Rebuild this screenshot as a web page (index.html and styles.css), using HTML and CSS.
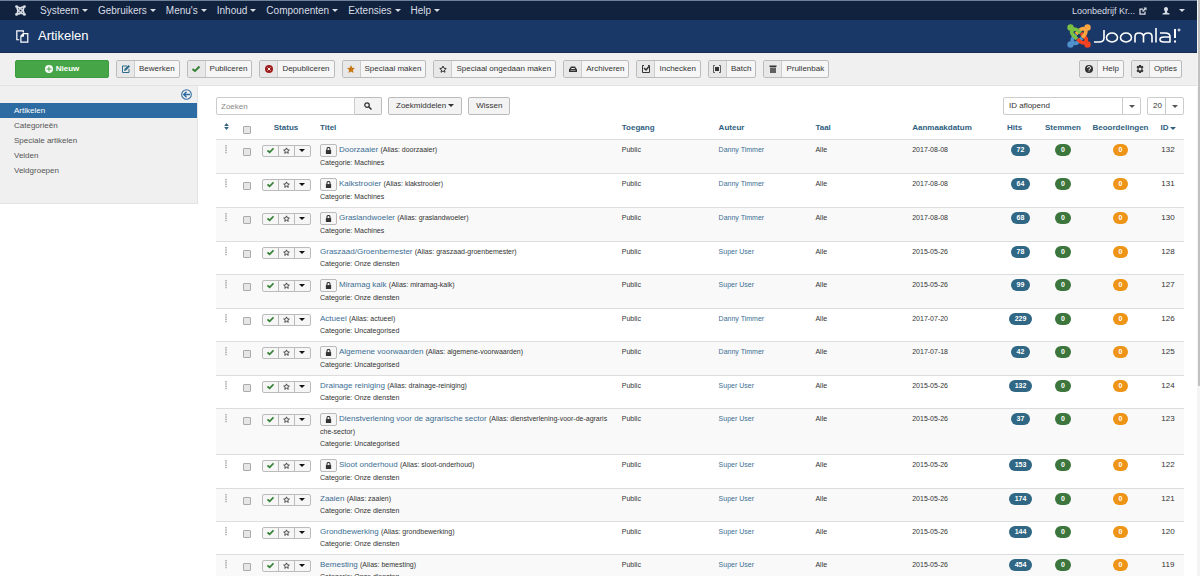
FILE: index.html
```html
<!DOCTYPE html>
<html lang="nl">
<head>
<meta charset="utf-8">
<meta name="viewport" content="width=device-width, initial-scale=1">
<title>Artikelen</title>
<link rel="stylesheet" href="styles.css">
</head>
<body>
<svg class="sprite" aria-hidden="true">
  <symbol id="joomla" viewBox="0 0 24 24"><g fill="none" stroke-width="3.600" stroke-linejoin="round"><path class="j-blue" d="M15 14l-4 4q-3 2.500-5 .5T6.500 13L9 10.500"/><path class="j-red" d="M14 9l4 4q2.500 3 .5 5t-5.500-.5L10.500 15"/><path class="j-orange" d="M9 10l4-4q3-2.500 5-.5T17.500 11L15 13.500"/><path class="j-green" d="M10 15l-4-4q-2.500-3-.5-5t5.500.5L13.500 9"/></g><circle class="f-green" cx="3.500" cy="3.500" r="3.200"/><circle class="f-orange" cx="20.500" cy="3.500" r="3.200"/><circle class="f-red" cx="20.500" cy="20.500" r="3.200"/><circle class="f-blue" cx="3.500" cy="20.500" r="3.200"/></symbol>
  <symbol id="plus" viewBox="0 0 16 16"><path fill="currentColor" fill-rule="evenodd" d="M8 0a8 8 0 1 0 0 16A8 8 0 0 0 8 0zM7 3h2v4h4v2H9v4H7V9H3V7h4z"/></symbol>
  <symbol id="edit" viewBox="0 0 16 16"><path fill="none" stroke="currentColor" stroke-width="2" d="M10 2H1v13h13V8"/><path fill="currentColor" d="M4 12l1-4 8-8 3 3-8 8z"/></symbol>
  <symbol id="check" viewBox="0 0 16 16"><path fill="none" stroke="currentColor" stroke-width="4" d="M1 8l5 4 9-9"/></symbol>
  <symbol id="cancel" viewBox="0 0 16 16"><circle cx="8" cy="8" r="8" fill="currentColor"/><path stroke="#eee" stroke-width="2" d="M5 5l6 6M11 5l-6 6"/></symbol>
  <symbol id="star" viewBox="0 0 16 16"><path fill="currentColor" d="M8 0l2.400 5.500 5.600.5-4.200 4 1.200 6L8 13l-5 3 1.200-6L0 6l5.600-.5z"/></symbol>
  <symbol id="star-o" viewBox="0 0 16 16"><path fill="none" stroke="currentColor" stroke-width="2" d="M8 2l2 4.500 4.500.5-3.500 3 1 4.500-4-2.500-4 2.500 1-4.500L1.500 7 6 6.500z"/></symbol>
  <symbol id="archive" viewBox="0 0 16 16"><path fill="currentColor" fill-rule="evenodd" d="M4 3h8l4 6v5H0V9zM5 6L4 8h8l-1-2zM3 11v1h10v-1z"/></symbol>
  <symbol id="checkin" viewBox="0 0 16 16"><path fill="none" stroke="currentColor" stroke-width="2" d="M4 1H1v14h14V1h-3"/><path fill="none" stroke="currentColor" stroke-width="3" d="M4 6l4 4 6-7"/></symbol>
  <symbol id="batch" viewBox="0 0 16 16"><path fill="none" stroke="currentColor" stroke-width="1.500" d="M4 1H1v14h3M12 1h3v14h-3"/><path fill="currentColor" d="M4 4h8v8H4z"/></symbol>
  <symbol id="trash" viewBox="0 0 16 16"><path fill="currentColor" d="M1 1h14v3H1z"/><path fill="currentColor" fill-opacity=".75" d="M2 5h12v11H2z"/></symbol>
  <symbol id="help" viewBox="0 0 16 16"><circle cx="8" cy="8" r="8" fill="currentColor"/><path fill="none" stroke="#eee" stroke-width="2" d="M5 6q0-3 3-3t3 3-3 3v1M8 11v2"/></symbol>
  <symbol id="cog" viewBox="0 0 16 16"><path fill="currentColor" fill-rule="evenodd" d="M6 0h4l.5 2.500L13 1.500l2 3-2 2v3l2 2-2 3-2.500-1L10 16H6l-.5-2.500-2.500 1-2-3 2-2v-3l-2-2 2-3 2.500 1zM8 5a3 3 0 1 0 0 6 3 3 0 0 0 0-6z"/></symbol>
  <symbol id="copy" viewBox="0 0 16 16"><g fill="none" stroke="currentColor" stroke-width="1.500"><path d="M4 12H1V1h8v2M9 4.500h5.500V15H6V7.500zM9 4.500v3H6"/></g></symbol>
  <symbol id="external" viewBox="0 0 16 16"><path fill="none" stroke="currentColor" stroke-width="2.500" d="M8 4H2v10h10V9"/><path fill="currentColor" d="M9 1h6v6l-2-2-5 5-2-2 5-5z"/></symbol>
  <symbol id="user" viewBox="0 0 16 16"><path fill="currentColor" d="M8 0c3 0 4 2 4 4s-1 4-2 5v2l5 2v2H1v-2l5-2V9C5 8 4 6 4 4s1-4 4-4z"/></symbol>
  <symbol id="back" viewBox="0 0 16 16"><circle cx="8" cy="8" r="7" fill="none" stroke="currentColor" stroke-width="1.500"/><path fill="none" stroke="currentColor" stroke-width="2" d="M13 8H4M8 4L4 8l4 4"/></symbol>
  <symbol id="search" viewBox="0 0 16 16"><circle cx="6" cy="6" r="4.500" fill="none" stroke="currentColor" stroke-width="2.500"/><path stroke="currentColor" stroke-width="3" d="M9.500 9.500L15 15"/></symbol>
  <symbol id="lock" viewBox="0 0 16 16"><path fill="none" stroke="currentColor" stroke-width="2.500" d="M4.500 8V5q0-4 3.500-4t3.500 4v3"/><path fill="currentColor" d="M2 7h12v9H2z"/></symbol>
  <symbol id="sort" viewBox="0 0 8 12"><path fill="currentColor" d="M0 5l4-5 4 5zM0 7h8l-4 5z"/></symbol>
  <symbol id="grip" viewBox="0 0 4 12"><path fill="currentColor" d="M1 0h2v2H1zM1 3h2v2H1zM1 6h2v2H1zM1 9h2v2H1z"/></symbol>
</svg>

<nav class="navbar">
  <a class="brand" href="#" aria-label="Joomla"><svg class="ic"><use href="#joomla"/></svg></a>
  <a class="m" href="#">Systeem<i class="caret"></i></a>
  <a class="m" href="#">Gebruikers<i class="caret"></i></a>
  <a class="m" href="#">Menu's<i class="caret"></i></a>
  <a class="m" href="#">Inhoud<i class="caret"></i></a>
  <a class="m" href="#">Componenten<i class="caret"></i></a>
  <a class="m" href="#">Extensies<i class="caret"></i></a>
  <a class="m" href="#">Help<i class="caret"></i></a>
  <a class="site" href="#">Loonbedrijf Kr... <svg class="ic"><use href="#external"/></svg></a>
  <a class="account" href="#" aria-label="Account"><svg class="ic"><use href="#user"/></svg><i class="caret"></i></a>
</nav>

<header class="header">
  <svg class="page-icon"><use href="#copy"/></svg>
  <h1>Artikelen</h1>
  <svg class="logo" viewBox="0 0 116 24" role="img" aria-label="Joomla!">
    <svg class="mark" x="1" width="24" height="24"><use href="#joomla"/></svg>
    <g fill="none" stroke="#fff" stroke-width="1.600">
      <path d="M38 6v8q0 4-5 4h-5"/>
      <ellipse cx="46" cy="13.500" rx="5.500" ry="4.500"/><ellipse cx="60" cy="13.500" rx="5.500" ry="4.500"/>
      <path d="M69 18.500v-6q0-3.500 4-3.500t4.500 3.500v6M77.500 12.500Q78 9 82 9t4 3.500v6M90 4v14.500"/>
      <path d="M104 18.500v-6Q104 9 99 9h-5M104 13h-6q-4 0-4 2.500t4 2.500h6"/>
      <path stroke-width="2" d="M109 5v9M109 16.500v2"/><circle cx="113" cy="6" r="1" stroke-width="1"/>
    </g>
  </svg>
</header>

<div class="toolbar">
  <button class="new"><svg class="ic"><use href="#plus"/></svg>Nieuw</button>
  <button class="tb"><span class="cell blue"><svg class="ic"><use href="#edit"/></svg></span>Bewerken</button>
  <button class="tb"><span class="cell green"><svg class="ic"><use href="#check"/></svg></span>Publiceren</button>
  <button class="tb"><span class="cell red"><svg class="ic"><use href="#cancel"/></svg></span>Depubliceren</button>
  <button class="tb"><span class="cell orange"><svg class="ic"><use href="#star"/></svg></span>Speciaal maken</button>
  <button class="tb"><span class="cell"><svg class="ic"><use href="#star-o"/></svg></span>Speciaal ongedaan maken</button>
  <button class="tb"><span class="cell"><svg class="ic"><use href="#archive"/></svg></span>Archiveren</button>
  <button class="tb"><span class="cell"><svg class="ic"><use href="#checkin"/></svg></span>Inchecken</button>
  <button class="tb"><span class="cell"><svg class="ic"><use href="#batch"/></svg></span>Batch</button>
  <button class="tb"><span class="cell"><svg class="ic"><use href="#trash"/></svg></span>Prullenbak</button>
  <button class="tb push"><span class="cell"><svg class="ic"><use href="#help"/></svg></span>Help</button>
  <button class="tb"><span class="cell"><svg class="ic"><use href="#cog"/></svg></span>Opties</button>
</div>

<div class="layout">
  <aside class="sidebar">
    <button class="collapse" aria-label="Zijbalk verbergen"><svg><use href="#back"/></svg></button>
    <a class="active" href="#">Artikelen</a>
    <a href="#">Categorieën</a>
    <a href="#">Speciale artikelen</a>
    <a href="#">Velden</a>
    <a href="#">Veldgroepen</a>
  </aside>

  <main class="content">
    <form class="filters">
      <div class="search">
        <input type="text" placeholder="Zoeken" aria-label="Zoeken">
        <button type="button" aria-label="Zoek"><svg class="ic"><use href="#search"/></svg></button>
      </div>
      <button type="button" class="btn">Zoekmiddelen<i class="caret"></i></button>
      <button type="button" class="btn">Wissen</button>
      <div class="select order"><select aria-label="Sorteren"><option>ID aflopend</option></select></div>
      <div class="select limit"><select aria-label="Aantal"><option>20</option></select></div>
    </form>

    <table class="articles">
      <colgroup><col class="c-grip"><col class="c-check"><col class="c-status"><col><col class="c-text"><col class="c-text"><col class="c-text"><col class="c-text"><col class="c-hits"><col class="c-votes"><col class="c-rating"><col class="c-id"></colgroup>
      <thead>
        <tr><th class="mid"><svg class="sort"><use href="#sort"/></svg></th><th class="mid"><input type="checkbox" aria-label="Alles selecteren"></th><th class="mid">Status</th><th>Titel</th><th>Toegang</th><th>Auteur</th><th>Taal</th><th>Aanmaakdatum</th><th class="tight">Hits</th><th class="mid">Stemmen</th><th class="mid">Beoordelingen</th><th class="mid">ID<i class="caret"></i></th></tr>
      </thead>
      <tbody id="rows"></tbody>
    </table>
  </main>
</div>
<div class="scrollbar"></div>
<script src="app.js"></script>
</body>
</html>
```

FILE: app.js
```js
// title, alias, category, locked, author, date, hits, id
const articles = [
  ["Doorzaaier", "doorzaaier", "Machines", 1, "Danny Timmer", "2017-08-08", 72, 132],
  ["Kalkstrooier", "klakstrooier", "Machines", 1, "Danny Timmer", "2017-08-08", 64, 131],
  ["Graslandwoeler", "graslandwoeler", "Machines", 1, "Danny Timmer", "2017-08-08", 68, 130],
  ["Graszaad/Groenbemester", "graszaad-groenbemester", "Onze diensten", 0, "Super User", "2015-05-26", 78, 128],
  ["Miramag kalk", "miramag-kalk", "Onze diensten", 1, "Super User", "2015-05-26", 99, 127],
  ["Actueel", "actueel", "Uncategorised", 0, "Danny Timmer", "2017-07-20", 229, 126],
  ["Algemene voorwaarden", "algemene-voorwaarden", "Uncategorised", 1, "Danny Timmer", "2017-07-18", 42, 125],
  ["Drainage reiniging", "drainage-reiniging", "Onze diensten", 0, "Super User", "2015-05-26", 132, 124],
  ["Dienstverlening voor de agrarische sector", "dienstverlening-voor-de-agraris<wbr>che-sector", "Uncategorised", 1, "Super User", "2015-05-26", 37, 123],
  ["Sloot onderhoud", "sloot-onderhoud", "Onze diensten", 1, "Super User", "2015-05-26", 153, 122],
  ["Zaaien", "zaaien", "Onze diensten", 0, "Super User", "2015-05-26", 174, 121],
  ["Grondbewerking", "grondbewerking", "Onze diensten", 0, "Super User", "2015-05-26", 144, 120],
  ["Bemesting", "bemesting", "Onze diensten", 0, "Super User", "2015-05-26", 454, 119]
];

const icon = name => `<svg class="ic"><use href="#${name}"/></svg>`;

document.getElementById("rows").innerHTML = articles.map(([title, alias, category, locked, author, date, hits, id]) => `
  <tr>
    <td class="mid"><svg class="grip"><use href="#grip"/></svg></td>
    <td class="mid"><input type="checkbox" aria-label="${title}"></td>
    <td class="mid"><div class="group"><button class="ok" aria-label="Gepubliceerd">${icon("check")}</button><button aria-label="Speciaal">${icon("star-o")}</button><button aria-label="Acties"><i class="caret"></i></button></div></td>
    <td><div class="title">${locked ? `<button class="lock" aria-label="Vergrendeld">${icon("lock")}</button>` : ""}<a href="#">${title}</a> <span class="alias">(Alias: ${alias})</span></div><div class="category">Categorie: ${category}</div></td>
    <td>Public</td><td><a href="#">${author}</a></td><td>Alle</td><td>${date}</td>
    <td class="mid"><span class="badge hits">${hits}</span></td>
    <td class="mid"><span class="badge votes">0</span></td>
    <td class="mid"><span class="badge rating">0</span></td>
    <td class="mid id">${id}</td>
  </tr>`).join("");
```

FILE: styles.css
```css
* { box-sizing: border-box; }
html { height: 100%; overflow: hidden; }
body {
  margin: 0;
  height: 100%;
  overflow: hidden;
  background: #fff;
  color: #333;
  font: 8px/12px "Liberation Sans", Arial, sans-serif;
}
a { color: #3b6e93; text-decoration: none; }
button, input, select { font: inherit; color: inherit; margin: 0; }
button { padding: 0; cursor: pointer; }
.sprite { position: absolute; width: 0; height: 0; }
.ic { width: 8px; height: 8px; flex: none; }
.caret {
  display: inline-block;
  margin-left: 4px;
  border: 3px solid transparent;
  border-top-color: currentColor;
  border-bottom: 0;
  vertical-align: middle;
}

.j-green { stroke: var(--mark, #7ac143); }
.j-orange { stroke: var(--mark, #f9a541); }
.j-red { stroke: var(--mark, #f44321); }
.j-blue { stroke: var(--mark, #5091cd); }
.f-green { fill: var(--mark, #7ac143); }
.f-orange { fill: var(--mark, #f9a541); }
.f-red { fill: var(--mark, #f44321); }
.f-blue { fill: var(--mark, #5091cd); }

.navbar {
  display: flex;
  align-items: center;
  height: 20px;
  padding: 0 15px;
  border-top: 1px solid #6e8299;
  background: #10223e;
  font-size: 10px;
}
.navbar a { display: flex; align-items: center; color: #d9dde5; }
.navbar .brand { margin-right: 14px; }
.brand .ic { width: 11px; height: 11px; }
.brand { --mark: #d9dde5; }
.navbar .m { margin-right: 10px; }
.navbar .m .caret { margin-left: 3px; }
.navbar .site { gap: 4px; margin-left: auto; font-size: 9px; }
.navbar .account { gap: 5px; margin-left: 15px; }

.header {
  display: flex;
  align-items: center;
  height: 33px;
  padding: 0 18px 0 16px;
  border-bottom: 1px solid #142b52;
  background: #1a3867;
  color: #fff;
}
.page-icon { width: 13px; height: 13px; margin-right: 9px; }
h1 { margin: 0; font-size: 13px; font-weight: 400; line-height: 20px; }
.logo { width: 116px; height: 24px; margin-left: auto; }

.toolbar {
  display: flex;
  gap: 7px;
  padding: 7px 18px 7px 15px;
  border-bottom: 1px solid #e3e3e3;
  background: #f0f0f0;
}
.toolbar button { height: 18px; border-radius: 2px; white-space: nowrap; }
.new {
  display: flex;
  align-items: center;
  justify-content: center;
  gap: 3px;
  width: 94px;
  border: 1px solid #3d9a40;
  background: #46a546;
  color: #fff;
  font-weight: 700;
}
.tb {
  display: flex;
  align-items: center;
  padding-right: 4px;
  border: 1px solid #bbb;
  background: #f6f6f6;
}
.cell {
  display: flex;
  align-items: center;
  justify-content: center;
  align-self: stretch;
  width: 18px;
  margin-right: 4px;
  border-right: 1px solid #ccc;
  background: #e8e8e8;
}
.push { margin-left: auto; }
.blue { color: #2f6c8a; }
.green { color: #378137; }
.red { color: #a01c1c; }
.orange { color: #c67610; }

.layout { display: flex; align-items: flex-start; }
.sidebar {
  display: flex;
  flex-direction: column;
  flex: none;
  width: 198px;
  padding-bottom: 25px;
  border: 1px solid #e3e3e3;
  border-width: 0 1px 1px 0;
  background: #f0f0f0;
}
.collapse {
  align-self: flex-end;
  height: 17px;
  margin-right: 5px;
  border: 0;
  background: none;
  color: #2a69a1;
}
.collapse svg { display: block; width: 11px; height: 11px; }
.sidebar a { padding: 0 14px; color: #555; line-height: 15px; }
.sidebar .active { background: #2d6ca2; color: #fff; }

.content { flex: 1; min-width: 0; padding: 11px 16px 0 18px; }
.filters { display: flex; gap: 6px; margin-bottom: 3px; }
.search { display: flex; }
.search input {
  width: 139px;
  height: 18px;
  padding: 0 4px;
  border: 1px solid #ccc;
  border-radius: 2px 0 0 2px;
}
.search input::placeholder { color: #888; }
.search button {
  width: 27px;
  border: 1px solid #bbb;
  border-left: 0;
  border-radius: 0 2px 2px 0;
  background: #f3f3f3;
}
.search .ic { display: block; margin: auto; }
.btn {
  height: 18px;
  padding: 0 7px;
  border: 1px solid #bbb;
  border-radius: 2px;
  background: #f3f3f3;
}
.btn .caret { margin-left: 2px; }
.select { position: relative; }
.select select {
  display: block;
  appearance: none;
  width: 100%;
  height: 18px;
  padding: 0 5px;
  border: 1px solid #ccc;
  border-radius: 2px;
  background: linear-gradient(#ccc, #ccc) right 17px top / 1px 100% no-repeat, #fff;
}
.select::after {
  content: "";
  position: absolute;
  top: 8px;
  right: 6px;
  border: 3px solid transparent;
  border-top-color: #555;
  border-bottom: 0;
  pointer-events: none;
}
.order { width: 138px; margin-left: auto; }
.limit { width: 37px; }

.articles { width: 100%; table-layout: fixed; border-collapse: collapse; }
.c-grip { width: 20px; }
.c-check { width: 21px; }
.c-status { width: 58px; }
.c-text { width: 10%; }
.c-hits { width: 33px; }
.c-votes { width: 52px; }
.c-rating { width: 63px; }
.c-id { width: 32px; }
th {
  height: 21px;
  padding: 0 5px;
  color: #2f6080;
  text-align: left;
  white-space: nowrap;
}
th .caret { margin-left: 1px; }
td {
  padding: 4px 5px;
  border-top: 1px solid #ddd;
  font-size: 7px;
  vertical-align: top;
}
tbody tr:nth-child(odd) { background: #f9f9f9; }
.mid { padding-left: 0; padding-right: 0; text-align: center; }
.tight { padding-left: 3px; }
.id { font-size: 8px; }
.sort { width: 5px; height: 7px; }
.grip { display: block; width: 4px; height: 9px; margin: 1px auto 0; color: #aaa; }
input[type="checkbox"] {
  display: block;
  appearance: none;
  width: 8px;
  height: 8px;
  margin: 4px auto 0;
  border: 1px solid #aaa;
  border-radius: 1px;
  background: #e6e6e6;
}
.group { display: inline-flex; height: 12px; margin-top: 1px; vertical-align: top; }
.group button {
  display: flex;
  align-items: center;
  justify-content: center;
  width: 17px;
  margin-right: -1px;
  border: 1px solid #bbb;
  background: #f6f6f6;
}
.group button:first-child { border-radius: 2px 0 0 2px; }
.group button:last-child { margin-right: 0; border-radius: 0 2px 2px 0; }
.group .ic { width: 7px; height: 7px; }
.group .caret { margin: 0; color: #111; }
.group .ok { color: #378137; }
.lock {
  display: inline-flex;
  align-items: center;
  justify-content: center;
  width: 17px;
  height: 13px;
  margin-right: 2px;
  border: 1px solid #bbb;
  border-radius: 2px;
  background: #f6f6f6;
  vertical-align: top;
}
.lock .ic { width: 7px; height: 7px; }
.title { font-size: 8px; }
.alias { font-size: 7px; }
.badge {
  display: inline-block;
  height: 12px;
  padding: 0 6px;
  border-radius: 6px;
  color: #fff;
  font-weight: 700;
  line-height: 12px;
  vertical-align: top;
}
.hits { background: #2f6784; }
.votes { background: #3c763d; }
.rating { background: #ee9416; }

.scrollbar {
  position: fixed;
  top: 0;
  right: 0;
  bottom: 0;
  width: 3px;
  background: linear-gradient(#c1c1c1, #c1c1c1) right top / 2px 67% no-repeat, #f4f4f4;
}
```
